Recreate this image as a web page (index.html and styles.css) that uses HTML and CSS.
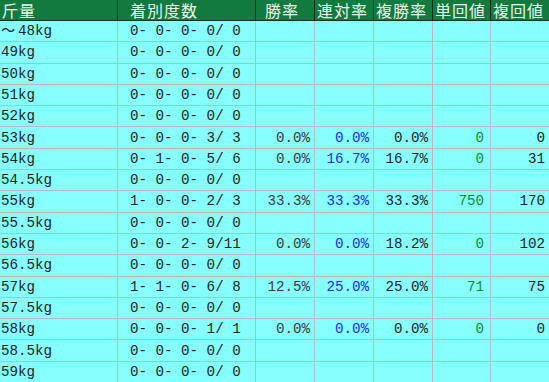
FILE: index.html
```html
<!DOCTYPE html>
<html lang="ja">
<head>
<meta charset="utf-8">
<link rel="stylesheet" href="styles.css">
</head>
<body>
<div class="table">
  <div class="row head">
    <div class="c c1">斤量</div>
    <div class="c c2">着別度数</div>
    <div class="c c3">勝率</div>
    <div class="c">連対率</div>
    <div class="c">複勝率</div>
    <div class="c">単回値</div>
    <div class="c last">複回値</div>
  </div>
  <div class="row"><div class="c c1"><span class="wide">～</span>48kg</div><div class="c c2">0- 0- 0- 0/ 0</div><div class="c n"></div><div class="c n"></div><div class="c n"></div><div class="c n"></div><div class="c n last"></div></div>
  <div class="row"><div class="c c1">49kg</div><div class="c c2">0- 0- 0- 0/ 0</div><div class="c n"></div><div class="c n"></div><div class="c n"></div><div class="c n"></div><div class="c n last"></div></div>
  <div class="row"><div class="c c1">50kg</div><div class="c c2">0- 0- 0- 0/ 0</div><div class="c n"></div><div class="c n"></div><div class="c n"></div><div class="c n"></div><div class="c n last"></div></div>
  <div class="row"><div class="c c1">51kg</div><div class="c c2">0- 0- 0- 0/ 0</div><div class="c n"></div><div class="c n"></div><div class="c n"></div><div class="c n"></div><div class="c n last"></div></div>
  <div class="row"><div class="c c1">52kg</div><div class="c c2">0- 0- 0- 0/ 0</div><div class="c n"></div><div class="c n"></div><div class="c n"></div><div class="c n"></div><div class="c n last"></div></div>
  <div class="row"><div class="c c1">53kg</div><div class="c c2">0- 0- 0- 3/ 3</div><div class="c n grey">0.0%</div><div class="c n blue">0.0%</div><div class="c n">0.0%</div><div class="c n green">0</div><div class="c n last">0</div></div>
  <div class="row"><div class="c c1">54kg</div><div class="c c2">0- 1- 0- 5/ 6</div><div class="c n grey">0.0%</div><div class="c n blue">16.7%</div><div class="c n">16.7%</div><div class="c n green">0</div><div class="c n last">31</div></div>
  <div class="row"><div class="c c1">54.5kg</div><div class="c c2">0- 0- 0- 0/ 0</div><div class="c n"></div><div class="c n"></div><div class="c n"></div><div class="c n"></div><div class="c n last"></div></div>
  <div class="row"><div class="c c1">55kg</div><div class="c c2">1- 0- 0- 2/ 3</div><div class="c n grey">33.3%</div><div class="c n blue">33.3%</div><div class="c n">33.3%</div><div class="c n green">750</div><div class="c n last">170</div></div>
  <div class="row"><div class="c c1">55.5kg</div><div class="c c2">0- 0- 0- 0/ 0</div><div class="c n"></div><div class="c n"></div><div class="c n"></div><div class="c n"></div><div class="c n last"></div></div>
  <div class="row"><div class="c c1">56kg</div><div class="c c2">0- 0- 2- 9/11</div><div class="c n grey">0.0%</div><div class="c n blue">0.0%</div><div class="c n">18.2%</div><div class="c n green">0</div><div class="c n last">102</div></div>
  <div class="row"><div class="c c1">56.5kg</div><div class="c c2">0- 0- 0- 0/ 0</div><div class="c n"></div><div class="c n"></div><div class="c n"></div><div class="c n"></div><div class="c n last"></div></div>
  <div class="row"><div class="c c1">57kg</div><div class="c c2">1- 1- 0- 6/ 8</div><div class="c n grey">12.5%</div><div class="c n blue">25.0%</div><div class="c n">25.0%</div><div class="c n green">71</div><div class="c n last">75</div></div>
  <div class="row"><div class="c c1">57.5kg</div><div class="c c2">0- 0- 0- 0/ 0</div><div class="c n"></div><div class="c n"></div><div class="c n"></div><div class="c n"></div><div class="c n last"></div></div>
  <div class="row"><div class="c c1">58kg</div><div class="c c2">0- 0- 0- 1/ 1</div><div class="c n grey">0.0%</div><div class="c n blue">0.0%</div><div class="c n">0.0%</div><div class="c n green">0</div><div class="c n last">0</div></div>
  <div class="row"><div class="c c1">58.5kg</div><div class="c c2">0- 0- 0- 0/ 0</div><div class="c n"></div><div class="c n"></div><div class="c n"></div><div class="c n"></div><div class="c n last"></div></div>
  <div class="row"><div class="c c1">59kg</div><div class="c c2">0- 0- 0- 0/ 0</div><div class="c n"></div><div class="c n"></div><div class="c n"></div><div class="c n"></div><div class="c n last"></div></div>
</div>
</body>
</html>
```

FILE: styles.css
```css
* { box-sizing: border-box; }
html, body { margin: 0; padding: 0; background: #ffffff; }
.table {
  width: 549px;
  height: 382px;
  display: flex;
  flex-direction: column;
  background: #88ffff;
  font-family: "Liberation Mono", "Noto Sans CJK JP", monospace;
  font-size: 14.2px;
  color: #1e1e1e;
  overflow: hidden;
}
.row {
  display: grid;
  grid-template-columns: 118px 138px 59px 59px 59px 58px 58px;
  flex: 1 1 0;
  min-height: 0;
  border-bottom: 1px solid #bcbcbc;
}
.row:last-child { border-bottom: none; }
.c {
  display: flex;
  align-items: center;
  border-right: 1px solid #bcbcbc;
  white-space: pre;
  line-height: 1;
}
.c.last { border-right: none; }
.c1 { padding-left: 1px; }
.c2 { padding-left: 12px; }
.n { justify-content: flex-end; padding-right: 4px; }
.n.green { padding-right: 6px; }
.wide { display: inline-block; width: 17px; }
.grey { color: #3a3a3a; }
.blue { color: #1432e0; }
.green { color: #168a30; }

.head {
  flex: 0 0 21px;
  background: #127a3e;
  border-bottom: 1px solid #0a3a1e;
  font-family: "Noto Sans CJK JP", sans-serif;
  font-size: 16px;
  letter-spacing: 1px;
  color: #e6f6ea;
}
.head .c {
  border-right: 1px solid #073018;
  padding-left: 2px;
  line-height: 1;
}
.head .c.last { border-right: none; }
.head .c2 { padding-left: 12px; }
.head .c3 { padding-left: 9px; }
```
